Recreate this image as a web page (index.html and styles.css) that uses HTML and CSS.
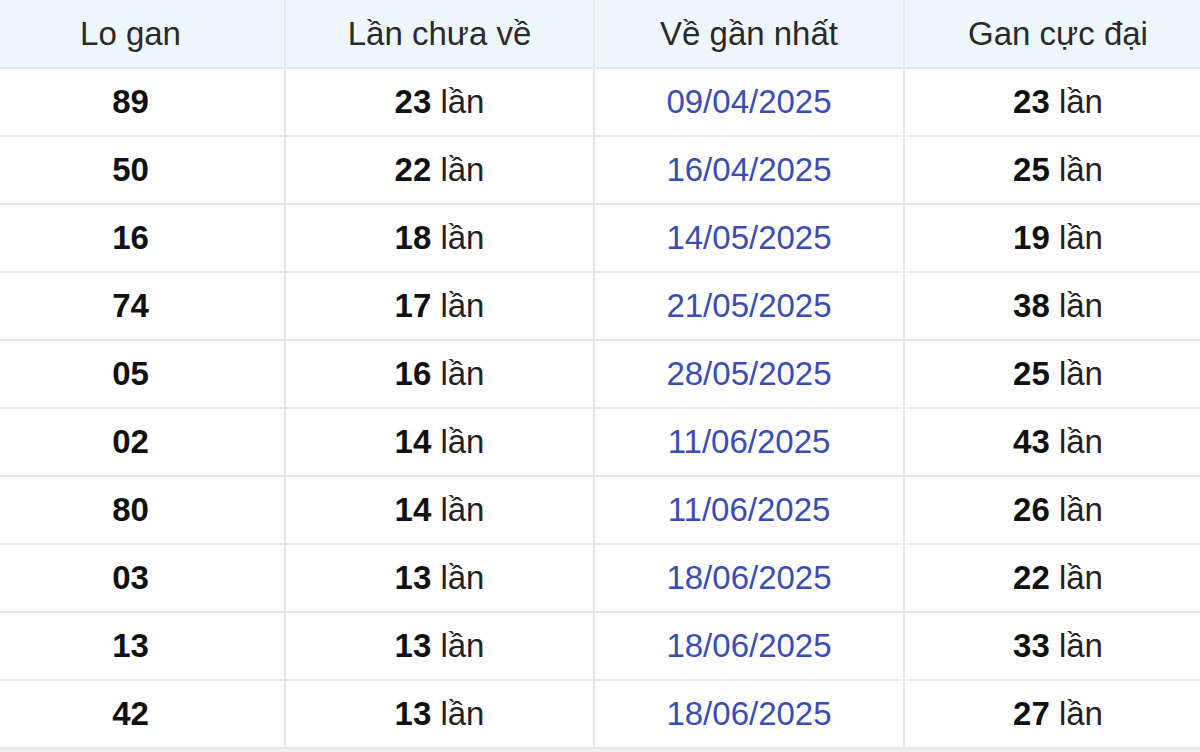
FILE: index.html
```html
<!DOCTYPE html>
<html lang="vi">
<head>
<meta charset="utf-8">
<link rel="stylesheet" href="styles.css">
</head>
<body>
<table class="gan">
  <colgroup>
    <col class="c1"><col class="c2"><col class="c3"><col class="c4">
  </colgroup>
  <thead>
    <tr><th>Lo gan</th><th>Lần chưa về</th><th>Về gần nhất</th><th>Gan cực đại</th></tr>
  </thead>
  <tbody>
    <tr><td><b>89</b></td><td><b>23</b> lần</td><td class="date">09/04/2025</td><td><b>23</b> lần</td></tr>
    <tr><td><b>50</b></td><td><b>22</b> lần</td><td class="date">16/04/2025</td><td><b>25</b> lần</td></tr>
    <tr><td><b>16</b></td><td><b>18</b> lần</td><td class="date">14/05/2025</td><td><b>19</b> lần</td></tr>
    <tr><td><b>74</b></td><td><b>17</b> lần</td><td class="date">21/05/2025</td><td><b>38</b> lần</td></tr>
    <tr><td><b>05</b></td><td><b>16</b> lần</td><td class="date">28/05/2025</td><td><b>25</b> lần</td></tr>
    <tr><td><b>02</b></td><td><b>14</b> lần</td><td class="date">11/06/2025</td><td><b>43</b> lần</td></tr>
    <tr><td><b>80</b></td><td><b>14</b> lần</td><td class="date">11/06/2025</td><td><b>26</b> lần</td></tr>
    <tr><td><b>03</b></td><td><b>13</b> lần</td><td class="date">18/06/2025</td><td><b>22</b> lần</td></tr>
    <tr><td><b>13</b></td><td><b>13</b> lần</td><td class="date">18/06/2025</td><td><b>33</b> lần</td></tr>
    <tr><td><b>42</b></td><td><b>13</b> lần</td><td class="date">18/06/2025</td><td><b>27</b> lần</td></tr>
  </tbody>
</table>
</body>
</html>
```

FILE: styles.css
```css
html, body {
  margin: 0;
  padding: 0;
  background: #efeff0;
  overflow: hidden;
}
body {
  font-family: Arial, "Liberation Sans", sans-serif;
  color: #222;
}
.gan {
  border-collapse: collapse;
  table-layout: fixed;
  width: 1236px;
  margin-left: -25px;
  margin-top: -2px;
  background: #fff;
}
.gan .c1 { width: 309px; }
.gan .c2 { width: 309px; }
.gan .c3 { width: 310px; }
.gan .c4 { width: 308px; }
.gan th, .gan td {
  border: 2px solid #e3e6ea;
  text-align: center;
  vertical-align: middle;
  padding: 0;
  font-size: 33px;
  line-height: 36px;
}
.gan th {
  height: 67px;
  background: #eef6fe;
  font-weight: normal;
  color: #2a2a2a;
}
.gan td {
  height: 66px;
}
.gan td b {
  font-weight: bold;
  color: #111;
}
.gan td.date {
  color: #3b4db3;
}
```
